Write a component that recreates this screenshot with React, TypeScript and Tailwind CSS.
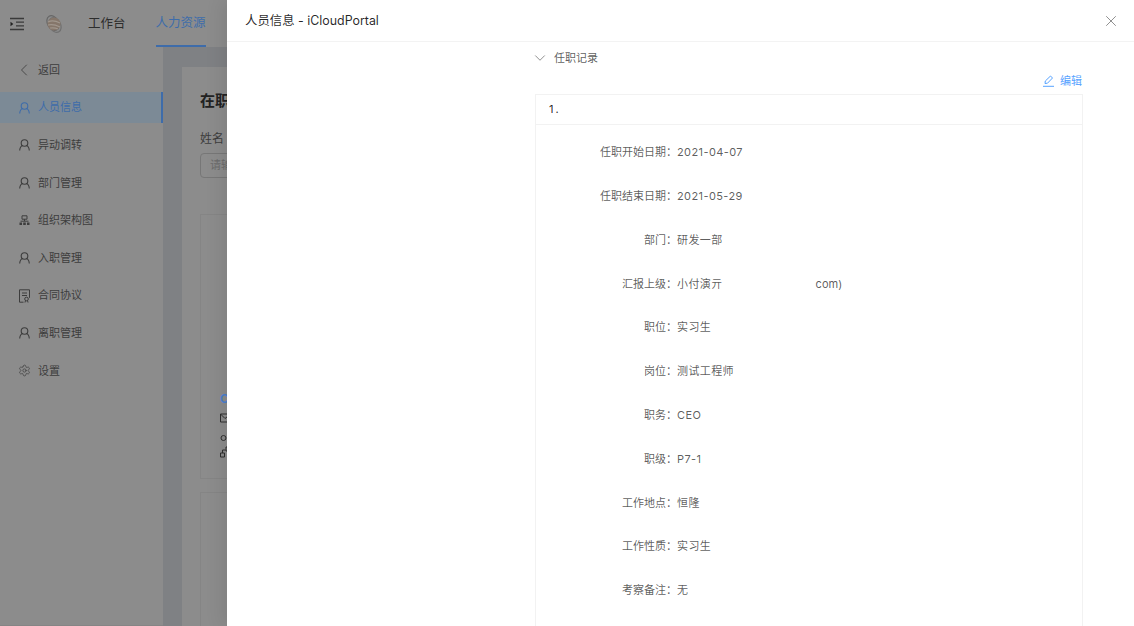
import { ChevronDown, ChevronLeft, Settings, X } from "lucide-react"

const font = { fontFamily: 'Inter, "Noto Sans CJK SC", sans-serif' }

interface NavItem {
  label: string
  icon: "user" | "org" | "doc" | "gear" | "back"
  active?: boolean
}

const navItems: NavItem[] = [
  { label: "返回", icon: "back" },
  { label: "人员信息", icon: "user", active: true },
  { label: "异动调转", icon: "user" },
  { label: "部门管理", icon: "user" },
  { label: "组织架构图", icon: "org" },
  { label: "入职管理", icon: "user" },
  { label: "合同协议", icon: "doc" },
  { label: "离职管理", icon: "user" },
  { label: "设置", icon: "gear" },
]

const rows = [
  { label: "任职开始日期", value: "2021-04-07" },
  { label: "任职结束日期", value: "2021-05-29" },
  { label: "部门", value: "研发一部" },
  { label: "汇报上级", value: "小付演亓", tail: "com)" },
  { label: "职位", value: "实习生" },
  { label: "岗位", value: "测试工程师" },
  { label: "职务", value: "CEO" },
  { label: "职级", value: "P7-1" },
  { label: "工作地点", value: "恒隆" },
  { label: "工作性质", value: "实习生" },
  { label: "考察备注", value: "无" },
]

function NavIcon({ icon }: { icon: NavItem["icon"] }) {
  if (icon === "back") return <ChevronLeft size={20} strokeWidth={1} className="shrink-0" />
  if (icon === "gear") return <Settings size={13} strokeWidth={1.3} className="shrink-0" />
  if (icon === "user")
    return (
      <svg width="11" height="12" viewBox="0 0 11 12" fill="none" stroke="currentColor" strokeWidth="1.100" className="shrink-0">
        <circle cx="5.500" cy="4" r="3.300" />
        <path d="M.7 11.500c.2-2.800 1.700-4.600 2.800-5M10.300 11.500c-.2-2.800-1.700-4.600-2.800-5" />
      </svg>
    )
  if (icon === "org")
    return (
      <svg width="11" height="11" viewBox="0 0 11 11" fill="none" stroke="currentColor" strokeWidth="1" className="shrink-0">
        <path d="M3 .8h5v3.400H3z" />
        <path d="M5.500 4.200v2M1.500 6.200h8" />
        <path d="M.5 7.500h2.500V10H.5zM4.200 7.500h2.600V10H4.200zM8 7.500h2.500V10H8z" fill="currentColor" stroke="none" />
      </svg>
    )
  return (
    <svg width="11" height="14" viewBox="0 0 11 14" fill="none" stroke="currentColor" strokeWidth="1" className="shrink-0">
      <path d="M.5.8h10M.5.8v12.400M.5 13.200h4M10.500.8v8" />
      <path d="M3 4h5M3 6.500h5" />
      <circle cx="7.500" cy="10" r="1.800" />
      <path d="M6.500 11.500 6 13.500M8.500 11.500 9 13.500" />
    </svg>
  )
}

function Background() {
  return (
    <div className="flex h-full w-full flex-col bg-[#8c8c8c] text-[#3d3d3d]">
      <header className="flex h-[47px] shrink-0 items-center text-[12.5px]">
        <svg className="ml-[10px]" width="14" height="14" viewBox="0 0 14 14" fill="none" stroke="#3a3a3a" strokeWidth="1.300">
          <path d="M0 1.500h14M6 5.200h8M6 8.800h8M0 12.500h14" />
          <path d="M.5 4.700 3.300 7 .5 9.300z" fill="#222" stroke="none" />
        </svg>
        <svg className="ml-[21px]" width="18" height="20" viewBox="0 0 18 20" fill="none" strokeWidth="1.200">
          <ellipse cx="8" cy="9" rx="5.500" ry="7.800" transform="rotate(-30 8 9)" stroke="#666" />
          <ellipse cx="10" cy="11" rx="5.500" ry="7.800" transform="rotate(-30 10 11)" stroke="#707070" />
          <ellipse cx="9" cy="10" rx="6.500" ry="6.500" fill="#85766a" stroke="none" />
          <path d="M3 8c4-2 8-1 12 1M3 11c4-1 8 0 12 2M5 14c3-.5 6 0 8 1" stroke="#a1978d" />
        </svg>
        <span className="ml-[25px] pt-[1px] text-[#2d2d2d]">工作台</span>
        <span className="ml-[30px] flex h-full items-center border-b-2 border-[#3e6caa] pt-[2px] text-[#3e6caa]">人力资源</span>
      </header>
      <div className="flex min-h-0 flex-1">
        <aside className="flex h-full w-[163px] shrink-0 flex-col border-b border-[#858585] pb-[11px] pt-[7.500px] text-[11px]">
          {navItems.map((item) => (
            <div
              key={item.label}
              className={
                item.active
                  ? "mb-[6.600px] flex h-[31px] items-center border-r-2 border-[#3e6caa] bg-[#7c8a96] pl-[18px] text-[#3e6caa]"
                  : "mb-[6.600px] flex h-[31px] items-center pl-[18px]"
              }
            >
              <span className="mr-[8px] flex w-[12px] items-center justify-center"><NavIcon icon={item.icon} /></span>
              <span>{item.label}</span>
            </div>
          ))}
        </aside>
        <main className="min-w-0 flex-1 overflow-hidden bg-[#7f8184] pl-[19px] pt-[20px]">
          <div className="h-[600px] w-[900px] bg-[#8c8c8c] pl-[18px] pt-[24px]">
            <h2 className="text-[15px] font-semibold leading-5 text-[#222222]">在职员工</h2>
            <div className="mt-[20px] text-[12px] leading-4">姓名</div>
            <div className="mt-[6px] flex h-[25px] w-[200px] items-center rounded-sm border border-[#777777] pl-[9px] text-[11px] text-[#6b6b6b]">请输入</div>
            <div className="mt-[36px] h-[265px] w-[400px] border border-[#858585] pl-[19px] pt-[175px]">
              <div className="h-[19px] text-[12px] font-semibold text-[#4a7fd0]">C</div>
              <svg width="12" height="52" viewBox="0 0 12 52" fill="none" stroke="#2f2f2f" strokeWidth="1">
                <path d="M.5 5h9v8h-9zM.5 5l4.500 4.500L9.500 6" />
                <circle cx="3.500" cy="29" r="2.500" />
                <path d="M.5 44h4v4h-4zM6 38h4v4H6zM2.500 44v-3h3" />
              </svg>
            </div>
            <div className="mt-[13px] h-[200px] w-[400px] border border-[#858585]" />
          </div>
        </main>
      </div>
    </div>
  )
}

function Drawer() {
  return (
    <div className="absolute inset-y-0 left-[227px] right-0 flex flex-col bg-white shadow-[-6px_0_16px_rgba(0,0,0,0.08)]">
      <div className="flex h-[42px] shrink-0 items-center justify-between border-b border-[#f3f3f3] pl-[18px] pr-[14px] pt-[1px]">
        <span className="text-[12.4px] text-[#000000d9]">人员信息 - iCloudPortal</span>
        <X size={18} strokeWidth={0.9} className="text-[#000000a6]" />
      </div>
      <div className="min-h-0 flex-1 overflow-hidden pl-[308px] pr-[51px] text-[11px] text-[#000000a6]">
        <div className="flex h-[32px] items-center">
          <ChevronDown size={18} strokeWidth={0.9} className="-ml-[4px] text-[#000000a6]" />
          <span className="ml-[5px]">任职记录</span>
        </div>
        <div className="flex h-[20px] items-center justify-end pb-[6px] pr-[1px] text-[#57a3ff]">
          <svg width="11" height="12" viewBox="0 0 11 12" fill="none" stroke="currentColor" strokeWidth="1">
            <path d="M2 8.500 2.300 6 7.500 1l2 2-5 5.200z" />
            <path d="M0 11.300h11" />
          </svg>
          <span className="ml-[6px]">编辑</span>
        </div>
        <section className="border border-[#f2f2f2]">
          <div className="flex h-[30px] items-center border-b border-[#f2f2f2] pl-[13px] tracking-[2px] text-[#000000d9]">1.</div>
          <div className="pb-[40px] pt-[5.500px]">
            {rows.map((row) => (
              <div key={row.label} className="flex h-[43.800px] items-center">
                <span className="w-[141px] shrink-0 text-right">{row.label}：</span>
                <span className="tracking-[0.4px]">{row.value}</span>
                {row.tail && <span className="ml-[93px]">{row.tail}</span>}
              </div>
            ))}
          </div>
        </section>
      </div>
    </div>
  )
}

export default function App() {
  return (
    <div className="relative h-[626px] w-full overflow-hidden" style={font}>
      <Background />
      <Drawer />
    </div>
  )
}
